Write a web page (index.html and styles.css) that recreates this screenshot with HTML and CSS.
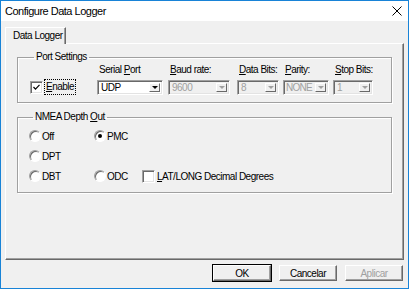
FILE: index.html
```html
<!DOCTYPE html>
<html lang="en">
<head>
    <meta charset="UTF-8">
    <meta name="viewport" content="width=device-width, initial-scale=1.0">
    <title>Configure Data Logger</title>
    <link rel="stylesheet" href="styles.css">
</head>
<body>
    <div class="window">
        <div class="titlebar">
            <span class="title">Configure Data Logger</span>
            <svg class="close" width="10" height="10" viewBox="0 0 10 10">
                <path d="M0.5 0.5 L9.5 9.5 M9.5 0.5 L0.5 9.5" stroke="#000" stroke-width="1" fill="none"/>
            </svg>
        </div>
        <div class="client">
            <div class="tabs">
                <div class="tab active">Data Logger</div>
            </div>
            <div class="tab-panel">
                <fieldset class="group port-group">
                    <legend>Port Settings</legend>
                    <div class="port-row">
                        <div class="enable">
                            <span class="checkbox">
                                <svg width="7" height="7" viewBox="0 0 7 7">
                                    <path d="M0.5 3 L2.5 5.2 L6.5 0.8" stroke="#000" stroke-width="1.2" fill="none"/>
                                </svg>
                            </span>
                            <span class="focus"><u>E</u>nable</span>
                        </div>
                        <div class="field serial">
                            <span class="field-label">Serial <u>P</u>ort</span>
                            <div class="combo"><span class="value">UDP</span><span class="arrow"></span></div>
                        </div>
                        <div class="field baud">
                            <span class="field-label"><u>B</u>aud rate:</span>
                            <div class="combo disabled"><span class="value">9600</span><span class="arrow"></span></div>
                        </div>
                        <div class="field databits">
                            <span class="field-label"><u>D</u>ata Bits:</span>
                            <div class="combo disabled"><span class="value">8</span><span class="arrow"></span></div>
                        </div>
                        <div class="field parity">
                            <span class="field-label"><u>P</u>arity:</span>
                            <div class="combo disabled"><span class="value">NONE</span><span class="arrow"></span></div>
                        </div>
                        <div class="field stopbits">
                            <span class="field-label"><u>S</u>top Bits:</span>
                            <div class="combo disabled"><span class="value">1</span><span class="arrow"></span></div>
                        </div>
                    </div>
                </fieldset>

                <fieldset class="group nmea-group">
                    <legend>NMEA Depth <u>O</u>ut</legend>
                    <div class="radio-grid">
                        <div class="option"><span class="radio"></span>Off</div>
                        <div class="option"><span class="radio selected"></span>PMC</div>
                        <div></div>
                        <div class="option"><span class="radio"></span>DPT</div>
                        <div></div>
                        <div></div>
                        <div class="option"><span class="radio"></span>DBT</div>
                        <div class="option"><span class="radio"></span>ODC</div>
                        <div class="option latlong"><span class="checkbox"></span><span><u>L</u>AT/LONG Decimal Degrees</span></div>
                    </div>
                </fieldset>
            </div>
            <div class="buttons">
                <button class="btn default">OK</button>
                <button class="btn">Cancelar</button>
                <button class="btn" disabled>Aplicar</button>
            </div>
        </div>
    </div>
</body>
</html>
```

FILE: styles.css
```css
* {
    box-sizing: border-box;
}

body {
    margin: 0;
    background-color: #fff;
    font-family: "Liberation Sans", Arial, sans-serif;
    font-size: 10px;
    letter-spacing: -0.5px;
    white-space: nowrap;
    color: #000;
}

u {
    text-decoration: underline;
    text-underline-offset: 1px;
}

.window {
    width: 409px;
    height: 289px;
    border: 1px solid #1883d7;
    display: flex;
    flex-direction: column;
}

.titlebar {
    height: 20px;
    background-color: #fff;
    display: flex;
    align-items: center;
    justify-content: space-between;
    padding: 0 6px 0 4px;
}

.title {
    font-size: 11px;
    letter-spacing: -0.5px;
}

.close {
    display: block;
}

.client {
    flex: 1;
    background-color: #f0f0f0;
    padding: 6px 4px 0 4px;
    display: flex;
    flex-direction: column;
}

.tabs {
    display: flex;
    height: 16px;
}

.tab {
    width: 61px;
    height: 17px;
    padding: 2px 0 0 7px;
    background-color: #f0f0f0;
    border-top: 1px solid #fff;
    border-left: 1px solid #fff;
    border-right: 1px solid #696969;
    box-shadow: inset -1px 0 0 #a0a0a0;
    position: relative;
    z-index: 1;
}

.tab-panel {
    height: 217px;
    border-top: 1px solid #fff;
    border-left: 1px solid #fff;
    border-right: 1px solid #696969;
    border-bottom: 1px solid #696969;
    box-shadow: inset -1px -1px 0 #a0a0a0;
    padding: 7px 11px 0 11px;
}

.group {
    margin: 0;
    border: 1px solid #a0a0a0;
    box-shadow: 1px 1px 0 #fff, inset 1px 1px 0 #fff;
}

.group legend {
    padding: 0 2px;
    margin-left: 4px;
    line-height: 12px;
}

.port-group {
    padding: 1px 0 6px 12px;
    height: 52px;
}

.port-row {
    display: flex;
    align-items: flex-end;
}

.enable {
    width: 67px;
    display: flex;
    align-items: center;
    height: 16px;
}

.checkbox {
    width: 13px;
    height: 13px;
    background-color: #fff;
    border: 1px solid;
    border-color: #a0a0a0 #fff #fff #a0a0a0;
    box-shadow: inset 1px 1px 0 #696969, inset -1px -1px 0 #e3e3e3;
    display: flex;
    align-items: center;
    justify-content: center;
    flex: none;
}

.focus {
    margin-left: 1px;
    padding: 2px 2px;
    outline: 1px dotted #000;
    outline-offset: -1px;
    line-height: 12px;
}

.field {
    display: flex;
    flex-direction: column;
}

.field-label {
    line-height: 12px;
    padding-left: 2px;
    margin-bottom: 4px;
}

.combo {
    height: 15px;
    display: flex;
    align-items: stretch;
    background-color: #fff;
    border: 1px solid;
    border-color: #a0a0a0 #fff #fff #a0a0a0;
    box-shadow: inset 1px 1px 0 #696969, inset -1px -1px 0 #e3e3e3;
    padding: 2px;
}

.combo .value {
    flex: 1;
    padding-left: 1px;
    line-height: 10px;
    overflow: hidden;
}

.combo .arrow {
    width: 11px;
    flex: none;
    background-color: #f0f0f0;
    border-top: 1px solid #fff;
    border-left: 1px solid #fff;
    border-right: 1px solid #696969;
    border-bottom: 1px solid #696969;
    display: flex;
    align-items: center;
    justify-content: center;
}

.combo .arrow::after {
    content: "";
    border-left: 3px solid transparent;
    border-right: 3px solid transparent;
    border-top: 3px solid #000;
}

.combo.disabled {
    background-color: #f0f0f0;
    color: #a0a0a0;
}

.combo.disabled .arrow::after {
    border-top-color: #a0a0a0;
}

.serial {
    width: 66px;
    margin-right: 5px;
}

.baud {
    width: 62px;
    margin-right: 7px;
}

.databits {
    width: 42px;
    margin-right: 4px;
}

.parity {
    width: 46px;
    margin-right: 4px;
}

.parity .value {
    padding-left: 0;
    letter-spacing: -0.7px;
}

.stopbits {
    width: 40px;
}

.nmea-group {
    margin-top: 8px;
    height: 82px;
    padding: 3px 0 0 11px;
}

.radio-grid {
    display: grid;
    grid-template-columns: 65px 48px auto;
    grid-auto-rows: 20px;
}

.option {
    display: flex;
    align-items: center;
}

.radio {
    width: 12px;
    height: 12px;
    border-radius: 50%;
    background-color: #fff;
    border: 1px solid;
    border-color: #a0a0a0 #fff #fff #a0a0a0;
    box-shadow: inset 1px 1px 0 #696969;
    margin-right: 1px;
    display: flex;
    align-items: center;
    justify-content: center;
}

.radio.selected::after {
    content: "";
    width: 4px;
    height: 4px;
    border-radius: 50%;
    background-color: #000;
}

.latlong .checkbox {
    margin-right: 2px;
}

.buttons {
    display: flex;
    justify-content: flex-end;
    gap: 8px;
    margin-top: 5px;
    padding-right: 1px;
}

.btn {
    width: 58px;
    height: 16px;
    padding: 0;
    font-family: "Liberation Sans", Arial, sans-serif;
    font-size: 10px;
    letter-spacing: -0.5px;
    color: #000;
    background-color: #f0f0f0;
    border: 1px solid;
    border-color: #fff #696969 #696969 #fff;
    box-shadow: inset -1px -1px 0 #a0a0a0;
}

.btn.default {
    outline: 1px solid #000;
    outline-offset: 0;
}

.btn:disabled {
    color: #a0a0a0;
}
```
